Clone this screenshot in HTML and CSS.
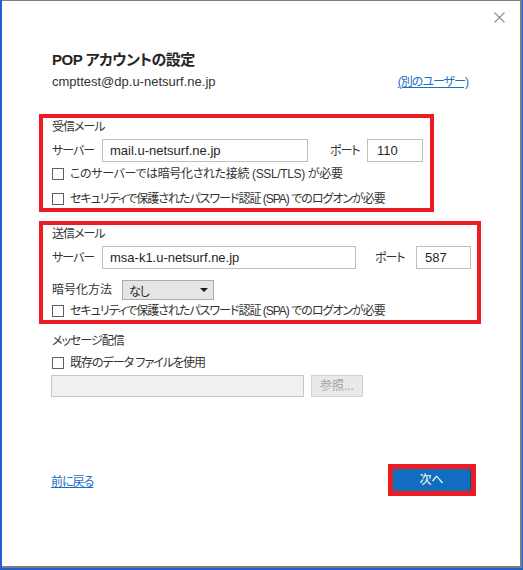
FILE: index.html
```html
<!DOCTYPE html>
<html lang="ja">
<head>
<meta charset="utf-8">
<title>POP アカウントの設定</title>
<link rel="stylesheet" href="styles.css">
</head>
<body>
<div class="dialog">
  <div class="topbar">
    <svg class="close" width="11" height="11" viewBox="0 0 11 11"><path d="M0.5 0.5 L10.5 10.5 M10.5 0.5 L0.5 10.5" stroke="#8f8f8f" stroke-width="1.1" fill="none"/></svg>
  </div>
  <div class="content">
    <div class="title">POP アカウントの設定</div>
    <div class="account-row">
      <span class="email">cmpttest@dp.u-netsurf.ne.jp</span>
      <a class="link" href="#">(別のユーザー)</a>
    </div>

    <div class="box box-in">
      <div class="heading">受信メール</div>
      <div class="server-row">
        <span class="lbl lbl-server">サーバー</span>
        <div class="field field-in">mail.u-netsurf.ne.jp</div>
        <span class="lbl lbl-port lbl-port-in">ポート</span>
        <div class="field port port-in">110</div>
      </div>
      <div class="check-row cr1"><span class="cb"></span><span class="cl">このサーバーでは暗号化された接続 (SSL/TLS) が必要</span></div>
      <div class="check-row cr2"><span class="cb"></span><span class="cl">セキュリティで保護されたパスワード認証 (SPA) でのログオンが必要</span></div>
    </div>

    <div class="box box-out">
      <div class="heading">送信メール</div>
      <div class="server-row">
        <span class="lbl lbl-server">サーバー</span>
        <div class="field field-out">msa-k1.u-netsurf.ne.jp</div>
        <span class="lbl lbl-port lbl-port-out">ポート</span>
        <div class="field port port-out">587</div>
      </div>
      <div class="enc-row">
        <span class="lbl lbl-enc">暗号化方法</span>
        <div class="select"><span>なし</span><span class="arrow"></span></div>
      </div>
      <div class="check-row cr3"><span class="cb"></span><span class="cl">セキュリティで保護されたパスワード認証 (SPA) でのログオンが必要</span></div>
    </div>

    <div class="heading delivery">メッセージ配信</div>
    <div class="check-row cr4"><span class="cb"></span><span class="cl">既存のデータ ファイルを使用</span></div>
    <div class="file-row">
      <div class="file-field"></div>
      <div class="browse">参照...</div>
    </div>

    <div class="footer">
      <a class="link back" href="#">前に戻る</a>
      <div class="next-wrap"><div class="next">次へ</div></div>
    </div>
  </div>
</div>
</body>
</html>
```

FILE: styles.css
```css
html, body {
  margin: 0;
  padding: 0;
  background: #1f5fce;
}

body {
  width: 523px;
  height: 570px;
  overflow: hidden;
  font-family: "Liberation Sans", "Noto Sans CJK JP", sans-serif;
  font-feature-settings: "palt";
  color: #333333;
  font-size: 12px;
  letter-spacing: -1px;
}

.dialog {
  box-sizing: border-box;
  width: 520px;
  height: 568px;
  margin-left: 2px;
  background: #ffffff;
  border-top: 1px solid #7d7d7d;
  border-right: 2px solid #7d7d7d;
  border-bottom: 2px solid #7d7d7d;
  display: flex;
  flex-direction: column;
}

.topbar {
  height: 48px;
  box-sizing: border-box;
  display: flex;
  justify-content: flex-end;
  padding: 11px 15px 0 0;
}

.close {
  display: block;
}

.content {
  padding-left: 50px;
  display: flex;
  flex-direction: column;
}

.title {
  font-size: 15px;
  font-weight: bold;
  line-height: 22px;
  height: 22px;
  color: #262626;
  letter-spacing: -0.5px;
}

.account-row {
  margin-top: 1px;
  height: 20px;
  line-height: 20px;
  display: flex;
  justify-content: space-between;
  margin-right: 52px;
}

.email {
  font-size: 13px;
  color: #333333;
  letter-spacing: 0;
}

.link {
  color: #1a6fc4;
  text-decoration: underline;
  font-size: 12px;
}

.box {
  box-sizing: border-box;
  border: 4px solid #ec1c24;
  margin-left: -13px;
  padding-left: 9px;
  display: flex;
  flex-direction: column;
}

.box-in {
  margin-top: 22px;
  width: 395px;
}

.box-out {
  margin-top: 9px;
  width: 442px;
}

.heading {
  height: 18px;
  line-height: 18px;
  font-size: 12px;
  color: #333333;
}

.server-row {
  margin-top: 3px;
  height: 23px;
  display: flex;
  align-items: center;
}

.lbl {
  font-size: 12px;
  line-height: 18px;
  color: #333333;
  white-space: nowrap;
}

.lbl-server {
  width: 50px;
}

.field {
  box-sizing: border-box;
  height: 23px;
  border: 1px solid #bfbfbf;
  background: #ffffff;
  font-size: 13px;
  line-height: 21px;
  color: #262626;
  padding-left: 7px;
  letter-spacing: 0;
}

.field-in {
  width: 206px;
}

.field-out {
  width: 254px;
}

.lbl-port-in {
  margin-left: 22px;
  width: 37px;
}

.lbl-port-out {
  margin-left: 19px;
  width: 41px;
}

.port {
  padding-left: 9px;
}

.port-in {
  width: 56px;
}

.port-out {
  width: 55px;
  padding-left: 8px;
}

.check-row {
  height: 18px;
  display: flex;
  align-items: center;
  font-size: 12px;
  line-height: 18px;
  white-space: nowrap;
}

.cb {
  box-sizing: border-box;
  width: 12px;
  height: 12px;
  border: 1px solid #5f5f5f;
  background: #ffffff;
  margin-right: 6px;
  flex: none;
}

.cr1 {
  margin-top: 3px;
}

.cr1 .cl {
  letter-spacing: -0.35px;
}

.cr2 {
  margin-top: 7px;
}

.enc-row {
  margin-top: 11px;
  height: 20px;
  display: flex;
  align-items: center;
}

.lbl-enc {
  width: 70px;
  letter-spacing: 0;
}

.select {
  box-sizing: border-box;
  width: 92px;
  height: 20px;
  background: #e5e5e5;
  border: 1px solid #adadad;
  display: flex;
  align-items: center;
  justify-content: space-between;
  padding: 0 5px 0 6px;
  font-size: 12px;
  color: #262626;
}

.arrow {
  width: 0;
  height: 0;
  border-left: 4px solid transparent;
  border-right: 4px solid transparent;
  border-top: 4px solid #1a1a1a;
}

.cr3 {
  margin-top: 2px;
}

.delivery {
  margin-top: 8px;
}

.cr4 {
  margin-top: 4px;
}

.file-row {
  margin-top: 3px;
  margin-left: -1px;
  height: 22px;
  display: flex;
  gap: 7px;
}

.file-field {
  box-sizing: border-box;
  width: 253px;
  height: 22px;
  background: #f0f0f0;
  border: 1px solid #c8c8c8;
}

.browse {
  box-sizing: border-box;
  width: 52px;
  height: 22px;
  background: #e9e9e9;
  border: 1px solid #d2d2d2;
  color: #a3a3a3;
  font-size: 12px;
  line-height: 20px;
  text-align: center;
  letter-spacing: 0;
}

.footer {
  margin-top: 67px;
  margin-right: 44px;
  margin-left: -1px;
  height: 32px;
  display: flex;
  justify-content: space-between;
  align-items: center;
}

.back {
  font-size: 12px;
}

.next-wrap {
  box-sizing: border-box;
  width: 88px;
  height: 32px;
  border: 5px solid #ec1c24;
}

.next {
  box-sizing: border-box;
  height: 22px;
  background: #106ebe;
  border-right: 1px solid #0b4f8a;
  color: #ffffff;
  font-size: 12px;
  line-height: 22px;
  text-align: center;
  letter-spacing: 0;
}
```
